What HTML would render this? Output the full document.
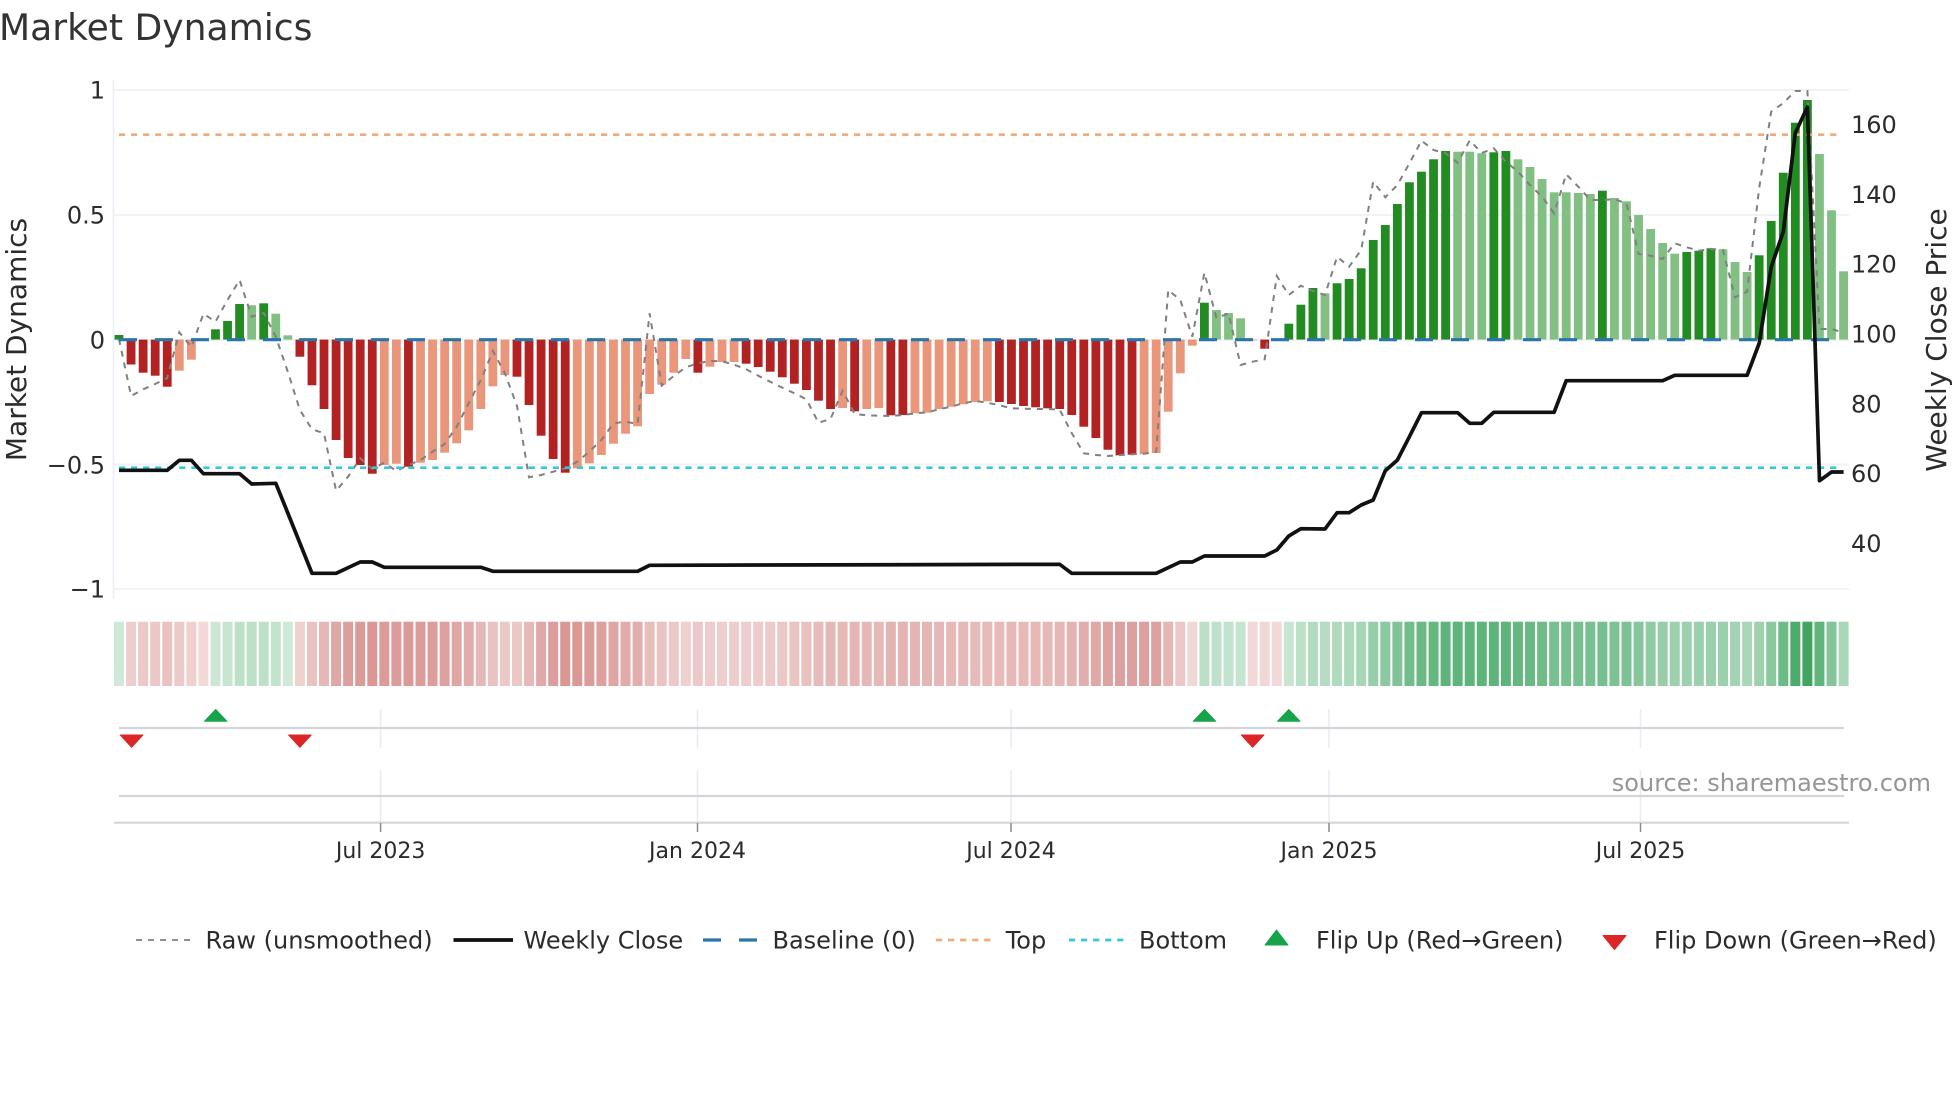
<!DOCTYPE html>
<html lang="en">
<head>
<meta charset="utf-8">
<title>Market Dynamics</title>
<style>
html,body{margin:0;padding:0;background:#fff;width:1960px;height:1102px;overflow:hidden}
svg{display:block;position:absolute;left:0;top:0}
text{font-family:"DejaVu Sans","Liberation Sans",sans-serif;fill:#2b2b2b}
</style>
</head>
<body>
<svg id="c" xmlns="http://www.w3.org/2000/svg" width="1960" height="1102" viewBox="0 0 1960 1102">
<rect width="1960" height="1102" fill="#fff"/>
<text x="-1" y="40" font-size="36.1" fill="#333" style="fill:#333">Market Dynamics</text>

<g stroke="#f0f2f5" stroke-width="2" fill="none">
<path d="M114 90H1849M114 215H1849M114 340H1849M114 464.5H1849M114 589H1849"/>
</g>
<path d="M113.5 80V599" stroke="#eceef7" stroke-width="1.6" fill="none"/>

<g id="bars"></g>

<g fill="none">
<path id="raw" stroke="#808080" stroke-width="2" stroke-dasharray="6 6"/>
<path d="M119 134.7H1842" stroke="#f0ac78" stroke-width="2.7" stroke-dasharray="6.2 5.85"/>
<path d="M119 467.7H1842" stroke="#35c9d6" stroke-width="2.7" stroke-dasharray="6.2 5.85"/>
<path d="M119 339.7H1844" stroke="#2a76a8" stroke-width="3.2" stroke-dasharray="18 18"/>
<path id="close" stroke="#111" stroke-width="3.7" stroke-linejoin="round"/>
</g>

<g font-size="24" text-anchor="end">
<text x="105" y="98.7">1</text>
<text x="105" y="223.4">0.5</text>
<text x="105" y="348.7">0</text>
<text x="105" y="473.7">−0.5</text>
<text x="105" y="597.4">−1</text>
</g>
<g font-size="24">
<text x="1851" y="133">160</text>
<text x="1851" y="203">140</text>
<text x="1851" y="272.7">120</text>
<text x="1851" y="342.7">100</text>
<text x="1851" y="412.4">80</text>
<text x="1851" y="482.2">60</text>
<text x="1851" y="552">40</text>
</g>
<text font-size="28" text-anchor="middle" transform="translate(26 339.5) rotate(-90)">Market Dynamics</text>
<text font-size="28" text-anchor="middle" transform="translate(1946 340) rotate(-90)">Weekly Close Price</text>

<g id="strip"></g>

<g stroke="#eaecf2" stroke-width="1.5" fill="none">
<path d="M380.6 709V747.7M697.5 709V747.7M1011 709V747.7M1329 709V747.7M1640.5 709V747.7"/>
<path d="M380.6 770V822M697.5 770V822M1011 770V822M1329 770V822M1640.5 770V822"/>
</g>
<g stroke="#d3d5d9" stroke-width="2.2" fill="none">
<path d="M119 728H1844M119 796H1844M114 822.7H1849"/>
</g>
<path d="M380.6 823V832M697.5 823V832M1011 823V832M1329 823V832M1640.5 823V832" stroke="#8a8a8a" stroke-width="1.5" fill="none"/>

<g fill="#16a34a" stroke="#16a34a" stroke-width="1" stroke-linejoin="round">
<path d="M215.7 709.5L227 721.3H204.4Z"/>
<path d="M1204.5 709.5L1215.8 721.3H1193.2Z"/>
<path d="M1288.8 709.5L1300.1 721.3H1277.5Z"/>
</g>
<g fill="#dc2626" stroke="#dc2626" stroke-width="1" stroke-linejoin="round">
<path d="M120.3 735H142.9L131.6 747.3Z"/>
<path d="M288.6 735H311.2L299.9 747.3Z"/>
<path d="M1241.3 735H1263.9L1252.6 747.3Z"/>
</g>

<text x="1931" y="791" font-size="24" text-anchor="end" style="fill:#969696">source: sharemaestro.com</text>

<g font-size="22" text-anchor="middle">
<text x="380.6" y="858">Jul 2023</text>
<text x="697.5" y="858">Jan 2024</text>
<text x="1011" y="858">Jul 2024</text>
<text x="1329" y="858">Jan 2025</text>
<text x="1640.5" y="858">Jul 2025</text>
</g>

<g fill="none">
<path d="M136 940H191" stroke="#808080" stroke-width="1.8" stroke-dasharray="6 6"/>
<path d="M453.5 940H513" stroke="#111" stroke-width="3.7"/>
<path d="M703 940H758" stroke="#2a76a8" stroke-width="3.2" stroke-dasharray="18 18"/>
<path d="M936 940H991" stroke="#f0ac78" stroke-width="2.7" stroke-dasharray="6.2 5.85"/>
<path d="M1069 940H1125" stroke="#35c9d6" stroke-width="2.7" stroke-dasharray="6.2 5.85"/>
</g>
<path d="M1276.5 930L1288 945H1265Z" fill="#16a34a" stroke="#16a34a" stroke-width="1" stroke-linejoin="round"/>
<path d="M1603 935.5H1626L1614.5 949.5Z" fill="#dc2626" stroke="#dc2626" stroke-width="1" stroke-linejoin="round"/>
<g font-size="24">
<text x="205.5" y="948.5">Raw (unsmoothed)</text>
<text x="523.5" y="948.5">Weekly Close</text>
<text x="772.5" y="948.5">Baseline (0)</text>
<text x="1005.7" y="948.5">Top</text>
<text x="1139" y="948.5">Bottom</text>
<text x="1316" y="948.5">Flip Up (Red→Green)</text>
<text x="1654" y="948.5">Flip Down (Green→Red)</text>
</g>
</svg>
<script>
(function(){
var NS="http://www.w3.org/2000/svg",Y0=339.6,P=12.06,X0=119;
function X(i){return X0+P*i}
var B="335D 364.5D 372.7D 375.7D 386.7D 370.7L 359.7L 341L 329.3D 321D 304D 305.3L 303.3D 313.7L 335.3L 356.7D 385.3D 409D 440D 458D 465D 473.7D 465L 463.7L 466.7D 462.7L 460L 452.7L 443.3L 430.3L 409L 386.3L 375L 376.7D 405D 435.7D 459D 472.7D 468.3L 463.3L 455L 443.7L 433.7L 426.3L 394L 384.7L 372.7L 359L 372.7D 366.7L 362L 362L 363.7D 367D 371.7D 377.3D 383.7D 390D 400.7D 409D 408L 411.3D 409L 408L 415.3D 415D 413.3L 412.7L 409L 406.7L 404.3L 402L 401.3L 402D 404D 406D 407.3D 408.3D 409D 415D 426.7D 438D 449.7D 455.3D 454.7D 454.3L 453L 411.7L 373.3L 345.7L 302.7D 310L 313L 318.3L 340.3L 348.7D 340.3L 323.7D 304.7D 288D 293.3L 283.3D 279D 268.3D 240D 225D 204D 182.3D 171.7D 159.3D 151D 151.7L 151.7L 153.3L 152.3D 151D 159.3L 167L 179L 192.3L 192.3L 193L 194L 190.7D 198L 201.3L 215L 229L 243L 253.7L 252D 250.7D 248.3D 249.3L 262L 272L 255.3D 221D 172.7D 122.7D 100D 154L 210.3L 271.3L".split(" ");
var bars=document.getElementById("bars"),strip=document.getElementById("strip");
B.forEach(function(s,i){
  var d=s.slice(-1)==="D",y=parseFloat(s),x=X(i),w=8.8,pos=y<Y0;
  var r=document.createElementNS(NS,"rect");
  var lx=Math.max(x-w/2,114.5);
  r.setAttribute("x",lx.toFixed(2));
  r.setAttribute("width",(x+w/2-lx).toFixed(2));
  r.setAttribute("y",(pos?y:Y0).toFixed(2));
  r.setAttribute("height",Math.abs(y-Y0).toFixed(2));
  r.setAttribute("fill",pos?(d?"#228b22":"#82bf82"):(d?"#b22222":"#e9967a"));
  bars.appendChild(r);
  var v=Math.abs(y-Y0)/249.5,a=.2+.68*v;
  var c=document.createElementNS(NS,"rect");
  var cx=Math.max(x-5,114);
  c.setAttribute("x",cx.toFixed(2));
  c.setAttribute("y","621.7");
  c.setAttribute("width",(x+5-cx).toFixed(2));
  c.setAttribute("height","64.3");
  c.setAttribute("fill",pos?"rgb(30,150,70)":"rgb(189,70,66)");
  c.setAttribute("fill-opacity",a.toFixed(3));
  strip.appendChild(c);
});
var R=[339,396,389.3,384,378,332.3,347,313.7,321.7,300,280,316.7,313,336.7,371.7,410,429.3,433.3,490.7,476.7,458.3,469,462.7,471,465,460,451.7,444,426.7,403.3,380,351,373.3,406,477.3,475,471.7,468.3,461.7,451.7,440,423.3,421.7,424,313.3,385.7,376,367.3,363.3,361,361.3,364.7,369.3,375.7,381.7,387.7,393.3,399.3,422.7,419,390.7,414,415.3,415.7,416,415,413.3,412.3,409.3,406.7,403.3,401,402.7,405.3,408.3,408.7,409,409,409.7,433,453.3,455,456,455,454.3,453.7,451.7,290,300,336.7,272.7,318.3,313.3,365,361.7,359.3,276,295,285.7,291,295,256.7,266.7,250,181.7,197.3,185,163.3,140.7,150,153.3,162.7,140.4,153,148.3,161.7,171.7,185,196.7,213.3,174.3,186.7,200,200,199.3,203.3,254,255.7,259,243.3,247.3,250.7,249,250,297.3,291.7,188,111.7,103,91,91,329,329,332.7];
document.getElementById("raw").setAttribute("d","M"+R.map(function(y,i){return X(i).toFixed(1)+" "+y}).join("L"));
var C=[[0,470.3],[4,470.3],[5,460.3],[6,460.3],[7,473.7],[10,473.7],[11,484],[13,483.3],[14,513],[16,573.3],[18,573.3],[20,562],[21,562],[22,567.3],[30,567.3],[31,571.3],[43,571.3],[44,565.3],[78,564.3],[79,573.3],[86,573.3],[88,562],[89,562],[90,556],[95,556],[96,550],[97,536],[98,528.7],[100,529],[101,512.7],[102,512.7],[103,505],[104,500],[105,470.7],[106,460],[107,436.7],[108,412.7],[111,412.7],[112,423.3],[113,423.3],[114,412.3],[119,412.3],[120,380.7],[128,380.7],[129,375.3],[135,375.3],[136,343.3],[137,267],[138,231.7],[139,133],[140,107],[141,480.7],[142,472],[143,472]];
document.getElementById("close").setAttribute("d","M"+C.map(function(p){return X(p[0]).toFixed(1)+" "+p[1]}).join("L"));
})();
</script>
</body>
</html>
